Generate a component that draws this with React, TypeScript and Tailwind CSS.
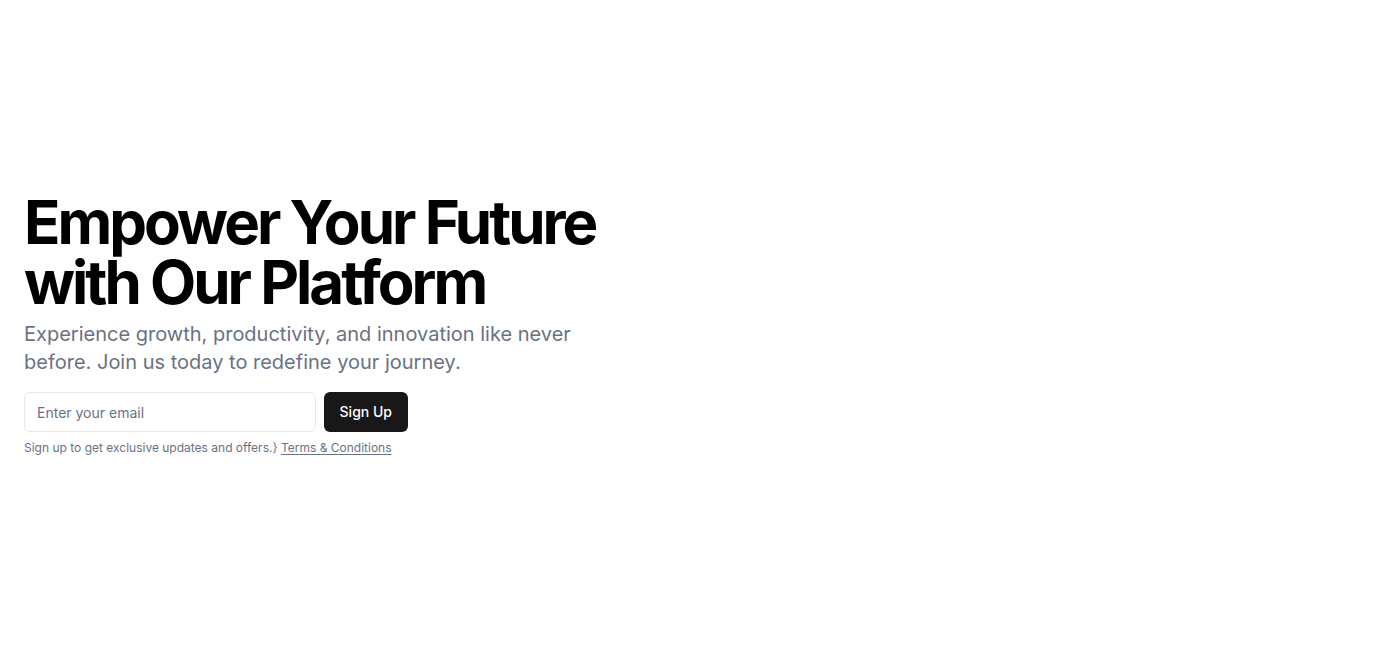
export default function App() {
  return (
    <section className="w-full py-48 bg-white" style={{ fontFamily: "Inter, 'Liberation Sans', sans-serif" }}>
      <div className="px-6">
        <div className="flex flex-col items-start space-y-4">
          <div className="space-y-2">
            <h1 className="text-6xl/none font-bold tracking-tighter text-black max-w-[600px]">
              Empower Your Future with Our Platform
            </h1>
            <p className="max-w-[600px] text-xl text-gray-500">
              Experience growth, productivity, and innovation like never before. Join us today to redefine your journey.
            </p>
          </div>
          <div className="w-full max-w-sm space-y-2">
            <form className="flex gap-2" onSubmit={(e) => e.preventDefault()}>
              <input
                type="email"
                placeholder="Enter your email"
                className="flex-1 h-10 rounded-md border border-gray-200 bg-white px-3 py-2 text-sm placeholder:text-gray-500 outline-none"
              />
              <button type="submit" className="h-10 rounded-md bg-zinc-900 px-4 text-sm font-medium text-white">
                Sign Up
              </button>
            </form>
            <p className="text-xs text-gray-500">
              Sign up to get exclusive updates and offers.{"}"}{" "}
              <a href="#" className="underline underline-offset-2">
                Terms &amp; Conditions
              </a>
            </p>
          </div>
        </div>
      </div>
    </section>
  );
}
